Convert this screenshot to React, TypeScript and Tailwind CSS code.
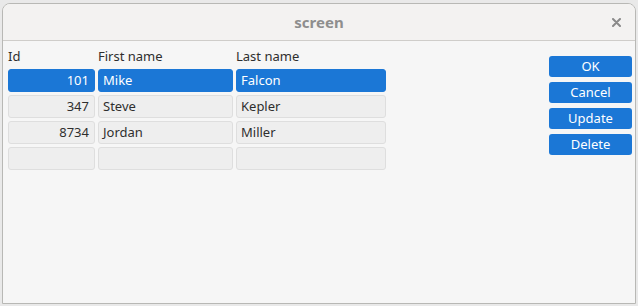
import React from "react";

type Row = { id: string; first: string; last: string; selected?: boolean };

const rows: Row[] = [
  { id: "101", first: "Mike", last: "Falcon", selected: true },
  { id: "347", first: "Steve", last: "Kepler" },
  { id: "8734", first: "Jordan", last: "Miller" },
  { id: "", first: "", last: "" },
];

function Cell({ text, selected, right }: { text: string; selected?: boolean; right?: boolean }) {
  return (
    <div
      className={`h-[23px] rounded-[3px] border flex items-center text-[13px] leading-none ${
        right ? "justify-end pr-[5px]" : "pl-[4px]"
      } ${
        selected
          ? "bg-[#1b77d6] border-[#1b77d6] text-white"
          : "bg-[#eeeeee] border-[#dedede] text-[#2e2e2e]"
      }`}
    >
      {text}
    </div>
  );
}

export default function App() {
  return (
    <div
      className="w-[638px] h-[306px] bg-[#e9e9e9] pt-[3px] pl-[2px]"
      style={{ fontFamily: '"Noto Sans", "Open Sans", sans-serif' }}
    >
      <div className="w-[634px] h-[301px] bg-[#f6f6f6] border border-[#b8b8b5] rounded-t-[8px] flex flex-col overflow-hidden">
        {/* title bar */}
        <div className="h-[37px] shrink-0 bg-[#f3f2f1] border-b border-[#cfcdca] flex items-center relative">
          <div className="flex-1 text-center text-[15px] font-bold text-[#8e8e8e]">screen</div>
          <svg className="absolute right-[14px] top-[14px]" width="9" height="9" viewBox="0 0 9 9">
            <path d="M1 1L8 8M8 1L1 8" stroke="#8a8a8a" strokeWidth="2" strokeLinecap="round" />
          </svg>
        </div>

        {/* content */}
        <div className="flex flex-1">
          <div className="pl-[5px] pt-[6px]">
            <div className="grid grid-cols-[87px_135px_150px] gap-x-[3px] text-[13px] text-[#2e2e2e] h-[20px] items-center">
              <div>Id</div>
              <div>First name</div>
              <div>Last name</div>
            </div>
            <div className="mt-[2px] flex flex-col gap-[3px]">
              {rows.map((r, i) => (
                <div key={i} className="grid grid-cols-[87px_135px_150px] gap-x-[3px]">
                  <Cell text={r.id} selected={r.selected} right />
                  <Cell text={r.first} selected={r.selected} />
                  <Cell text={r.last} selected={r.selected} />
                </div>
              ))}
            </div>
          </div>
          <div className="ml-auto mr-[3px] pt-[15px] flex flex-col gap-[5px]">
            {["OK", "Cancel", "Update", "Delete"].map((b) => (
              <button
                key={b}
                className="w-[83px] h-[21px] rounded-[3px] bg-[#1b77d6] text-white text-[13px] leading-none flex items-center justify-center"
              >
                {b}
              </button>
            ))}
          </div>
        </div>
      </div>
    </div>
  );
}
